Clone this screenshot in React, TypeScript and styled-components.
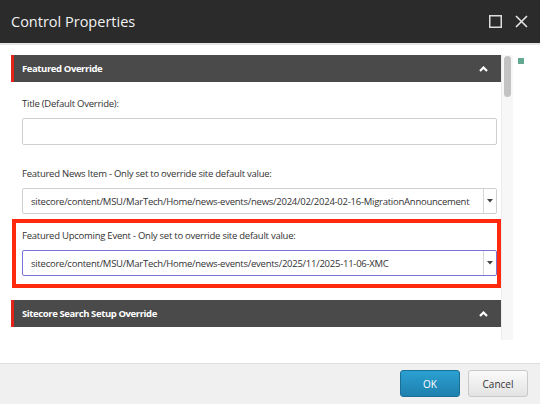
import React from 'react';
import styled, {createGlobalStyle} from 'styled-components';

const GlobalStyle = createGlobalStyle`
	html, body {
		margin: 0;
		padding: 0;
		background: #ffffff;
	}

	body {
		font-family: 'Open Sans', 'Liberation Sans', Arial, sans-serif;
		color: #333333;
	}
`;

const Dialog = styled.div`
	width: 540px;
	height: 404px;
	display: flex;
	flex-direction: column;
	overflow: hidden;
`;

const TitleBar = styled.header`
	height: 43px;
	flex: none;
	display: flex;
	align-items: center;
	justify-content: space-between;
	padding: 0 12px 0 11px;
	background: #2b2b2b;
	border-bottom: 2px solid #e6e6e6;
`;

const Title = styled.h1`
	margin: 0;
	font-size: 14.5px;
	font-weight: 400;
	color: #f2f2f2;
`;

const WindowButtons = styled.div`
	display: flex;
	align-items: center;
	gap: 13px;
`;

const IconButton = styled.button`
	border: 0;
	padding: 0;
	background: none;
	display: flex;
	cursor: pointer;
`;

const Body = styled.main`
	flex: 1;
	display: flex;
	padding: 10px 0 0 11px;
	background: #ffffff;
`;

const ScrollArea = styled.div`
	width: 490px;
	height: 285px;
	flex: none;
	overflow: hidden;
`;

const Track = styled.div`
	width: 11px;
	height: 285px;
	flex: none;
	position: relative;
	background: #f7f7f7;
	border-left: 1px solid #ececec;
`;

const Thumb = styled.div`
	position: absolute;
	top: 1px;
	left: 2px;
	width: 7px;
	height: 41px;
	border-radius: 4px;
	background: #c3c3c3;
`;

const Marker = styled.span`
	width: 6px;
	height: 6px;
	margin: 3px 0 0 5px;
	background: #62a892;
`;

const SectionHeader = styled.div`
	height: 27px;
	display: flex;
	align-items: center;
	justify-content: space-between;
	padding: 0 13px 0 8px;
	background: #4a4a4a;
	border-left: 3px solid #e2231a;
	font-size: 9.5px;
	font-weight: 700;
	letter-spacing: -0.4px;
	color: #ffffff;
`;

const SectionBody = styled.div`
	display: flex;
	flex-direction: column;
	gap: 21px;
	padding: 14px 4px 12px 11px;
`;

const Field = styled.div`
	display: flex;
	flex-direction: column;
`;

const Label = styled.label`
	font-size: 9.5px;
	line-height: 15px;
	letter-spacing: -0.25px;
	margin-bottom: 7px;
	color: #333333;
`;

const TextInput = styled.input`
	box-sizing: border-box;
	height: 27px;
	width: 100%;
	border: 1px solid #cfcfcf;
	border-radius: 2px;
	background: #ffffff;
	outline: none;
`;

const Select = styled.div<{$focused?: boolean}>`
	box-sizing: border-box;
	height: 26px;
	display: flex;
	align-items: stretch;
	border: 1px solid ${p => (p.$focused ? '#7a74d6' : '#cfcfcf')};
	border-radius: 2px;
	background: #ffffff;
`;

const SelectValue = styled.span`
	flex: 1;
	display: flex;
	align-items: center;
	padding-left: 8px;
	font-size: 9.5px;
	letter-spacing: -0.25px;
	color: #333333;
	white-space: nowrap;
	overflow: hidden;
`;

const SelectToggle = styled.span`
	width: 12px;
	display: flex;
	align-items: center;
	justify-content: center;
	border-left: 1px solid #d6d6d6;
`;

const Highlight = styled.div`
	margin: -16px -4px 0 -10px;
	padding: 5px 0 8px 6px;
	border: 4px solid #ff2a0d;
`;

const Footer = styled.footer`
	height: 40px;
	flex: none;
	display: flex;
	align-items: center;
	justify-content: flex-end;
	gap: 8px;
	padding: 0 12px 0 0;
	background: #f0f0f0;
	border-top: 1px solid #dedede;
`;

const Button = styled.button<{$primary?: boolean}>`
	width: 60px;
	height: 27px;
	margin-top: -1px;
	border-radius: 3px;
	font-family: inherit;
	font-size: 10px;
	cursor: pointer;
	color: ${p => (p.$primary ? '#ffffff' : '#333333')};
	border: 1px solid ${p => (p.$primary ? '#1b6f97' : '#c9c9c9')};
	background: ${p =>
		p.$primary
			? 'linear-gradient(#2aa0d2, #1f80ad)'
			: 'linear-gradient(#fafafa, #e3e3e3)'};
`;

const ChevronUp = () => (
	<svg width="9" height="6" viewBox="0 0 9 6">
		<polyline points="1,5 4.5,1.5 8,5" fill="none" stroke="#ffffff" strokeWidth="2.2"/>
	</svg>
);

const Caret = () => (
	<svg width="6" height="4" viewBox="0 0 6 4">
		<polygon points="0,0 6,0 3,3.5" fill="#444444"/>
	</svg>
);

const Dropdown = ({value, focused}: {value: string; focused?: boolean}) => (
	<Select $focused={focused}>
		<SelectValue>{value}</SelectValue>
		<SelectToggle><Caret/></SelectToggle>
	</Select>
);

const App = (): JSX.Element => (
	<>
		<GlobalStyle/>
		<Dialog>
			<TitleBar>
				<Title>Control Properties</Title>
				<WindowButtons>
					<IconButton aria-label="Maximize">
						<svg width="13" height="13" viewBox="0 0 13 13">
							<rect x="0.75" y="0.75" width="11.5" height="11.5" fill="none" stroke="#dcdcdc" strokeWidth="1.5"/>
						</svg>
					</IconButton>
					<IconButton aria-label="Close">
						<svg width="13" height="13" viewBox="0 0 13 13">
							<path d="M1 1L12 12M12 1L1 12" stroke="#e6e6e6" strokeWidth="1.6"/>
						</svg>
					</IconButton>
				</WindowButtons>
			</TitleBar>
			<Body>
				<ScrollArea>
					<SectionHeader>
						<span>Featured Override</span>
						<ChevronUp/>
					</SectionHeader>
					<SectionBody>
						<Field>
							<Label>Title (Default Override):</Label>
							<TextInput/>
						</Field>
						<Field>
							<Label>Featured News Item - Only set to override site default value:</Label>
							<Dropdown value="sitecore/content/MSU/MarTech/Home/news-events/news/2024/02/2024-02-16-MigrationAnnouncement"/>
						</Field>
						<Highlight>
							<Field>
								<Label>Featured Upcoming Event - Only set to override site default value:</Label>
								<Dropdown focused value="sitecore/content/MSU/MarTech/Home/news-events/events/2025/11/2025-11-06-XMC"/>
							</Field>
						</Highlight>
					</SectionBody>
					<SectionHeader>
						<span>Sitecore Search Setup Override</span>
						<ChevronUp/>
					</SectionHeader>
				</ScrollArea>
				<Track>
					<Thumb/>
				</Track>
				<Marker/>
			</Body>
			<Footer>
				<Button $primary>OK</Button>
				<Button>Cancel</Button>
			</Footer>
		</Dialog>
	</>
);

export default App;
